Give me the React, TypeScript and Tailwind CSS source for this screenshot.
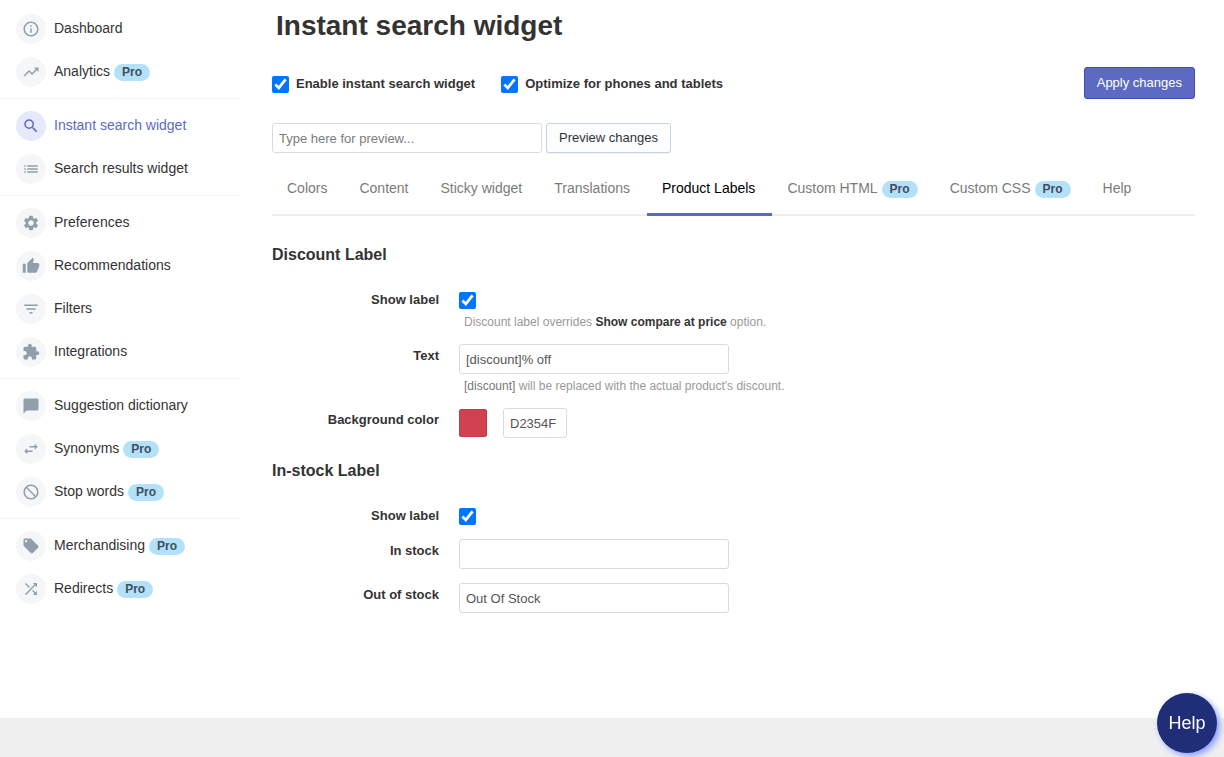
import type { ReactNode } from 'react';
import type { IconType } from 'react-icons';
import {
  MdInfoOutline,
  MdTrendingUp,
  MdSearch,
  MdList,
  MdSettings,
  MdThumbUp,
  MdFilterList,
  MdExtension,
  MdChatBubble,
  MdSwapHoriz,
  MdNotInterested,
  MdLocalOffer,
  MdShuffle,
} from 'react-icons/md';

type NavItem = { label: string; icon: IconType; pro?: boolean; active?: boolean };

const navGroups: NavItem[][] = [
  [
    { label: 'Dashboard', icon: MdInfoOutline },
    { label: 'Analytics', icon: MdTrendingUp, pro: true },
  ],
  [
    { label: 'Instant search widget', icon: MdSearch, active: true },
    { label: 'Search results widget', icon: MdList },
  ],
  [
    { label: 'Preferences', icon: MdSettings },
    { label: 'Recommendations', icon: MdThumbUp },
    { label: 'Filters', icon: MdFilterList },
    { label: 'Integrations', icon: MdExtension },
  ],
  [
    { label: 'Suggestion dictionary', icon: MdChatBubble },
    { label: 'Synonyms', icon: MdSwapHoriz, pro: true },
    { label: 'Stop words', icon: MdNotInterested, pro: true },
  ],
  [
    { label: 'Merchandising', icon: MdLocalOffer, pro: true },
    { label: 'Redirects', icon: MdShuffle, pro: true },
  ],
];

const tabs = [
  { label: 'Colors' },
  { label: 'Content' },
  { label: 'Sticky widget' },
  { label: 'Translations' },
  { label: 'Product Labels', active: true },
  { label: 'Custom HTML', pro: true },
  { label: 'Custom CSS', pro: true },
  { label: 'Help' },
];

const inputClass =
  'h-[30px] rounded-[3px] border border-[#d9dbdd] bg-white px-1.5 text-[13px] text-[#555] placeholder:text-[#7b7b7b]';

function ProBadge() {
  return (
    <span className="ml-1 rounded-full bg-[#b4e1fa] px-2 text-[12px] leading-[17px] font-bold text-[#414f5c]">
      Pro
    </span>
  );
}

function Sidebar() {
  return (
    <nav className="w-60 shrink-0 pt-[7px]">
      {navGroups.map((group, i) => (
        <div key={i}>
          {i > 0 && <hr className="my-[5px] border-t border-[#f4f5f6]" />}
          {group.map(({ label, icon: Icon, pro, active }) => (
            <a key={label} href="#" className="flex h-[43px] items-start pt-[7px] pl-4">
              <span
                className={`mr-2 flex size-[30px] items-center justify-center rounded-full ${
                  active ? 'bg-[#e6e8fe] text-[#5c6ac4]' : 'bg-[#f4f6f8] text-[#919eab]'
                }`}
              >
                <Icon className="size-[18px]" />
              </span>
              <span
                className={`flex items-center text-[14px] leading-7 ${
                  active ? 'text-[#5c6ac4]' : 'text-[#333]'
                }`}
              >
                {label}
              </span>
              {pro && (
                <span className="flex h-[30px] items-center">
                  <ProBadge />
                </span>
              )}
            </a>
          ))}
        </div>
      ))}
    </nav>
  );
}

function Field({ label, htmlFor, check, children }: { label: string; htmlFor: string; check?: boolean; children: ReactNode }) {
  return (
    <div className="flex items-start gap-5">
      <label
        htmlFor={htmlFor}
        className={`w-[167px] shrink-0 text-right text-[13px] leading-4 font-bold ${check ? '' : 'pt-1'}`}
      >
        {label}
      </label>
      <div>{children}</div>
    </div>
  );
}

function Hint({ children }: { children: ReactNode }) {
  return <p className="mt-1 pl-[5px] text-[12px] leading-4 text-[#999]">{children}</p>;
}

export default function App() {
  return (
    <div className="min-h-screen bg-[#efefef] font-['Liberation_Sans',Arial,sans-serif] text-[#333]">
      <div className="flex bg-white">
        <Sidebar />
        <main className="min-w-0 flex-1 pt-2.5 pr-[29px] pb-[105px] pl-8">
          <h1 className="pl-1 text-[28px] leading-8 font-bold">Instant search widget</h1>

          <div className="mt-[25px] flex items-center">
            <label className="flex items-center gap-[7px] pt-0.5 text-[13px] font-bold">
              <input type="checkbox" defaultChecked className="size-[17px]" />
              Enable instant search widget
            </label>
            <label className="ml-[26px] flex items-center gap-[7px] pt-0.5 text-[13px] font-bold">
              <input type="checkbox" defaultChecked className="size-[17px]" />
              Optimize for phones and tablets
            </label>
            <button
              type="button"
              className="ml-auto h-8 rounded-[3px] border border-[#3f4eae] bg-[#5c6ac4] px-3 text-[13px] text-white"
            >
              Apply changes
            </button>
          </div>

          <div className="mt-6 flex gap-1">
            <input
              type="text"
              aria-label="Preview search"
              placeholder="Type here for preview..."
              className={`${inputClass} w-[270px]`}
            />
            <button
              type="button"
              className="h-[30px] rounded-[3px] border border-[#c9d3de] bg-[#fcfdff] px-3 text-[13px] shadow-[0_1px_0_rgba(22,29,37,0.05)]"
            >
              Preview changes
            </button>
          </div>

          <div className="mt-[15px] flex shadow-[inset_0_-2px_0_#eeeeee]">
            {tabs.map(({ label, pro, active }) => (
              <a
                key={label}
                href="#"
                className={`flex items-center border-b-[3px] pt-2.5 pr-[17px] pb-[15px] pl-[15px] text-[14px] leading-5 whitespace-nowrap ${
                  active ? 'border-[#5c6ac4] text-black' : 'border-transparent text-[#7b7b7b]'
                }`}
              >
                {label}
                {pro && (
                  <span className="flex h-5 items-end">
                    <ProBadge />
                  </span>
                )}
              </a>
            ))}
          </div>

          {/* Discount label */}
          <section className="mt-[27px]">
            <h2 className="text-[16px] leading-6 font-bold">Discount Label</h2>
            <div className="mt-[25px] flex flex-col gap-3.5">
              <Field label="Show label" htmlFor="discount-show" check>
                <div className="h-[18px]">
                  <input id="discount-show" type="checkbox" defaultChecked className="block size-[17px]" />
                </div>
                <Hint>
                  Discount label overrides <b className="text-[#333]">Show compare at price</b> option.
                </Hint>
              </Field>
              <Field label="Text" htmlFor="discount-text">
                <input
                  id="discount-text"
                  type="text"
                  defaultValue="[discount]% off"
                  className={`${inputClass} block w-[270px]`}
                />
                <Hint>
                  <span className="text-[#777]">[discount]</span> will be replaced with the actual product's discount.
                </Hint>
              </Field>
              <Field label="Background color" htmlFor="discount-color">
                <div className="flex items-center gap-4">
                  <button
                    type="button"
                    aria-label="Pick color"
                    className="size-7 rounded-[2px] border border-[#bd3c49] bg-[#d2414f]"
                  />
                  <input
                    id="discount-color"
                    type="text"
                    defaultValue="D2354F"
                    className={`${inputClass} w-16`}
                  />
                </div>
              </Field>
            </div>
          </section>

          {/* In-stock label */}
          <section className="mt-[21px]">
            <h2 className="text-[16px] leading-6 font-bold">In-stock Label</h2>
            <div className="mt-[25px] flex flex-col gap-3.5">
              <Field label="Show label" htmlFor="stock-show" check>
                <input id="stock-show" type="checkbox" defaultChecked className="block size-[17px]" />
              </Field>
              <Field label="In stock" htmlFor="stock-in">
                <input id="stock-in" type="text" className={`${inputClass} block w-[270px]`} />
              </Field>
              <Field label="Out of stock" htmlFor="stock-out">
                <input
                  id="stock-out"
                  type="text"
                  defaultValue="Out Of Stock"
                  className={`${inputClass} block w-[270px]`}
                />
              </Field>
            </div>
          </section>
        </main>
      </div>

      <button
        type="button"
        className="fixed right-[7px] bottom-1 size-[60px] rounded-full bg-[#202e78] text-[18px] text-white shadow-[3px_3px_6px_#8c9eff]"
      >
        Help
      </button>
    </div>
  );
}
